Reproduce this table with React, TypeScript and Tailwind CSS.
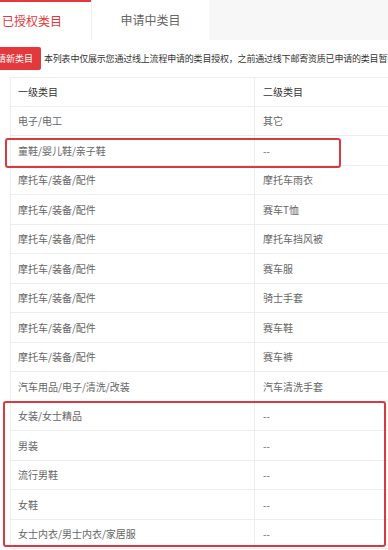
import type { ReactNode } from 'react'

const rows: [string, string][] = [
	['电子/电工', '其它'],
	['童鞋/婴儿鞋/亲子鞋', '--'],
	['摩托车/装备/配件', '摩托车雨衣'],
	['摩托车/装备/配件', '赛车T恤'],
	['摩托车/装备/配件', '摩托车挡风被'],
	['摩托车/装备/配件', '赛车服'],
	['摩托车/装备/配件', '骑士手套'],
	['摩托车/装备/配件', '赛车鞋'],
	['摩托车/装备/配件', '赛车裤'],
	['汽车用品/电子/清洗/改装', '汽车清洗手套'],
	['女装/女士精品', '--'],
	['男装', '--'],
	['流行男鞋', '--'],
	['女鞋', '--'],
	['女士内衣/男士内衣/家居服', '--'],
]

function Row({ children, head }: { children: ReactNode[]; head?: boolean }) {
	return (
		<div
			className={`grid grid-cols-[243px_1fr] h-[29.5px] border-b border-[#ededed] text-[10px] ${
				head ? 'text-[#333] border-t' : 'text-[#666]'
			}`}
		>
			<div className="flex items-center pl-[7px] whitespace-nowrap">{children[0]}</div>
			<div className="flex items-center pl-[8px] border-l border-[#ededed] whitespace-nowrap">
				{children[1]}
			</div>
		</div>
	)
}

export default function App() {
	return (
		<div className="relative w-[388px] h-[550px] overflow-hidden bg-white font-['Noto_Sans_CJK_SC',sans-serif]">
			<div className="flex h-[40px] bg-[#f7f7f7]">
				<div className="w-[91px] bg-white border-t-2 border-[#e4393c] flex items-center pl-[2px] text-[12px] text-[#e4393c]">
					已授权类目
				</div>
				<div className="w-[118px] bg-white border-l border-[#eeeeee] flex items-center justify-center text-[12px] text-[#666]">
					申请中类目
				</div>
			</div>

			<div className="flex items-center mt-[7px] h-[23px]">
				<button
					type="button"
					className="-ml-[20px] h-[23px] px-[8px] rounded-[2px] bg-[#e4393c] text-white text-[9px] whitespace-nowrap"
				>
					申请新类目
				</button>
				<p className="ml-[3px] whitespace-nowrap text-[9px] tracking-[-0.2px] text-[#333]">
					本列表中仅展示您通过线上流程申请的类目授权，之前通过线下邮寄资质已申请的类目暂不在此展示
				</p>
			</div>

			<div className="mt-[7px] ml-[10px] border-l border-[#ededed]">
				<Row head>
					{'一级类目'}
					{'二级类目'}
				</Row>
				{rows.map(([a, b], i) => (
					<Row key={i}>
						{a}
						{b}
					</Row>
				))}
			</div>

			{/* annotation boxes */}
			<div className="absolute left-[5px] top-[138px] w-[336px] h-[30px] border-2 border-[#d93a3f] rounded-[3px]" />
			<div className="absolute left-[3px] top-[401px] w-[383px] h-[146px] border-2 border-[#d93a3f] rounded-[3px]" />
		</div>
	)
}
